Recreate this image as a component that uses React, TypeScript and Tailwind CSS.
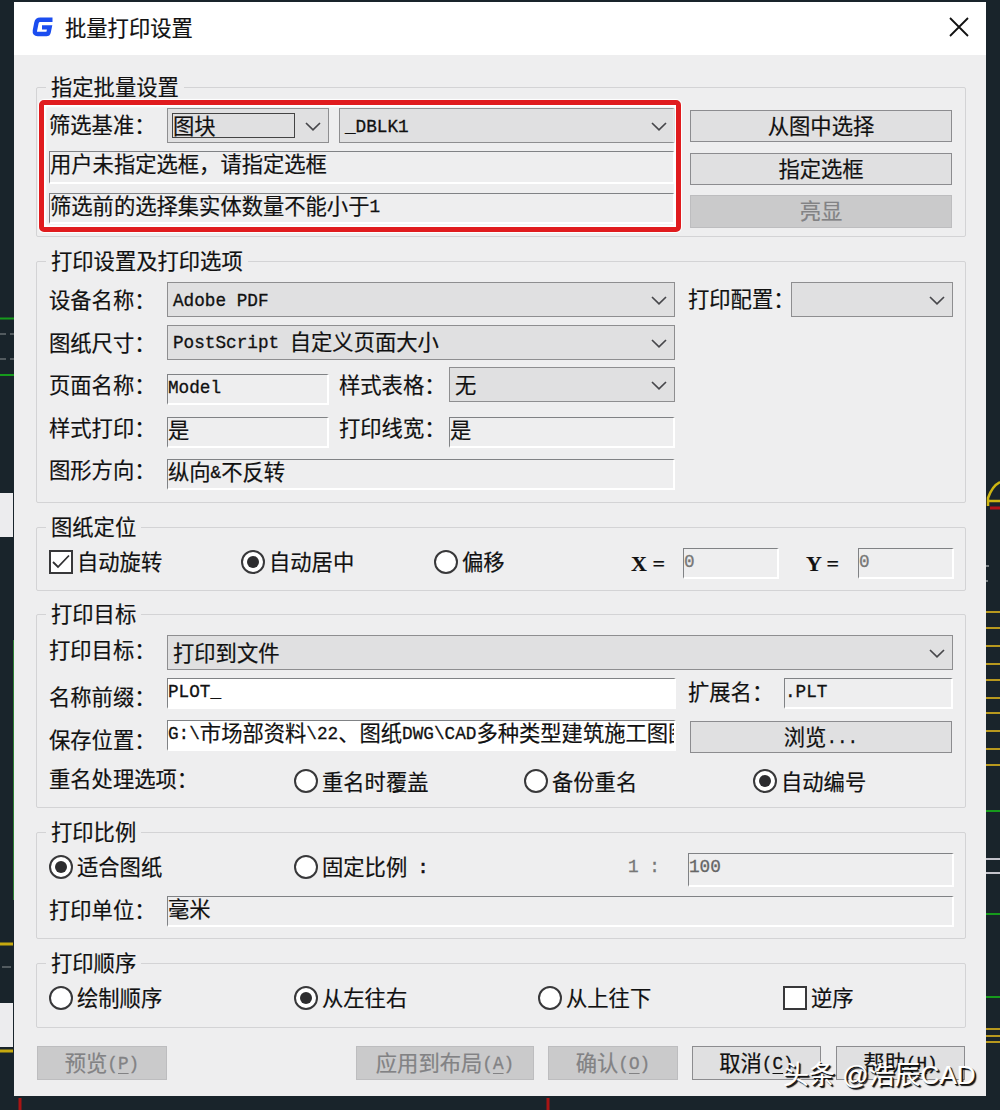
import type { ReactNode } from 'react';
import clsx from 'clsx';

function Latin({ children, className }: { children: ReactNode; className?: string }) {
  return (
    <span
      className={clsx(
        'align-[2px] whitespace-pre font-["Liberation_Mono","Noto_Sans_CJK_SC",monospace] text-[17.7px] [-webkit-text-stroke:0.3px]',
        className ?? 'leading-none',
      )}
    >
      {children}
    </span>
  );
}

function Group({ title, className, children }: { title: string; className: string; children: ReactNode }) {
  return (
    <section className={clsx('rounded-[2px] border border-[#d3d3d5] pl-3', className)}>
      <div className="flex h-0 items-center">
        <h2 className="-mt-[5px] -ml-[3px] bg-[#eeeeef] px-[5px] leading-6">{title}</h2>
      </div>
      {children}
    </section>
  );
}

function Label({ children, className = 'w-[118px] leading-[34px]' }: { children: ReactNode; className?: string }) {
  return <span className={clsx('shrink-0 whitespace-nowrap', className)}>{children}</span>;
}

function Select({ children, className, focused }: { children?: ReactNode; className: string; focused?: boolean }) {
  return (
    <div
      className={clsx(
        'flex h-[35px] shrink-0 items-center justify-between border border-[#8e8e90] bg-[#e0e0e1] pr-[7px]',
        focused ? 'pl-1' : 'pl-[5px]',
        className,
      )}
    >
      <span
        className={clsx(
          'whitespace-nowrap',
          focused ? 'h-[25px] w-[123px] border border-[#444] leading-[22px]' : 'pb-[2px]',
        )}
      >
        {children}
      </span>
      <svg className="mt-[2px] h-[9px] w-4" viewBox="0 0 16 9" fill="none" stroke="#47474b" strokeWidth="1.7">
        <path d="M1 1l7 6.8L15 1" />
      </svg>
    </div>
  );
}

function Field({ children, className }: { children?: ReactNode; className: string }) {
  return (
    <div
      className={clsx(
        'shrink-0 overflow-hidden whitespace-nowrap border-2 border-t border-l border-white border-t-[#808285] border-l-[#808285] leading-[22px]',
        className,
      )}
    >
      {children}
    </div>
  );
}

function Button({ children, className, disabled }: { children: ReactNode; className: string; disabled?: boolean }) {
  return (
    <button
      type="button"
      disabled={disabled}
      className={clsx(
        'shrink-0 border pb-[3px] leading-6 underline-offset-4',
        disabled ? 'border-[#bdbdbf] bg-[#cacacb] text-[#828284]' : 'border-[#8c8c8f] bg-[#e0e0e1]',
        className,
      )}
    >
      {children}
    </button>
  );
}

function Radio({ children, className, checked }: { children: ReactNode; className: string; checked?: boolean }) {
  return (
    <label className={clsx('flex shrink-0 items-center gap-1 whitespace-nowrap leading-6', className)}>
      <span className="flex size-6 items-center justify-center rounded-full border-2 border-[#38383a] bg-white">
        {checked && <span className="size-3 rounded-full bg-[#2d2d2f]" />}
      </span>
      <span className="pb-[1px]">{children}</span>
    </label>
  );
}

function Checkbox({ children, className, checked }: { children: ReactNode; className: string; checked?: boolean }) {
  return (
    <label className={clsx('flex shrink-0 items-center gap-1 whitespace-nowrap leading-6', className)}>
      <span className="flex size-6 items-center justify-center border-2 border-[#38383a] bg-white">
        {checked && (
          <svg className="size-5" viewBox="0 0 20 20" fill="none" stroke="#303032" strokeWidth="1.8">
            <path d="M2 10l5 5L18 3.5" />
          </svg>
        )}
      </span>
      <span className="pb-[1px]">{children}</span>
    </label>
  );
}

const yellowLines = [612, 628, 646, 664, 680, 698, 713, 731, 749, 765, 1029, 1036, 1042];

// Bits of the CAD drawing that stay visible around the dialog
function Drawing() {
  return (
    <svg className="absolute inset-0" width="1000" height="1110" fill="none" strokeWidth="2">
      <path d="M0 318.5h14M0 375h14M986 811h14M986 914h14M986 997h14" stroke="#169a1c" />
      <path d="M13.5 640v260" stroke="#2c7d35" strokeWidth="1" />
      <path d="M0 334h6m4 0h4M0 359h6m4 0h4M2 967h9" stroke="#8c9194" strokeWidth="1" />
      <path d="M0 493h13v44H0zM0 1003h13v44H0z" fill="#ececee" />
      <path d="M0 944h13M0 1051h13" stroke="#c6a90f" strokeWidth="3" />
      <path d="M20 1098v12M548 1098v12" stroke="#a81414" strokeWidth="3" />
      <path d="M986 859h14M986 873h14" stroke="#c3c3cb" />
      <path d="M986 566h3M986 581h2" stroke="#d4d8da" strokeWidth="1" />
      {yellowLines.map((y) => (
        <path key={y} d={`M986 ${y}h14`} stroke="#b7981e" />
      ))}
      <path d="M988 506V498Q992 486 1000 482M988 501h12" stroke="#cdb512" strokeWidth="2.5" />
      <path d="M990 508h10" stroke="#b01218" strokeWidth="3" />
    </svg>
  );
}

export default function App() {
  return (
    <div className='relative h-[1110px] w-[1000px] overflow-hidden bg-[#19242b] pt-[2px] pl-[14px] font-["Noto_Sans_CJK_SC",sans-serif] text-[21.3px] text-[#111] [-webkit-text-stroke:0.2px]'>
      <Drawing />
      <div className="relative h-[1094px] w-[972px] bg-[#eeeeef]">
        <header className="flex h-[53px] items-center bg-white pr-[17px] pb-[3px] pl-[18px]">
          <svg className="h-5 w-[21px]" viewBox="0 0 21 20" fill="none" stroke="#1b4df0" strokeWidth="4.4">
            <path d="M20.5 2.8H8.2Q5 2.8 4.4 6L2.9 13.5Q2.4 17 5.6 17H14.4Q16.2 17 16.6 15.2L17.6 10.4H10" />
          </svg>
          <h1 className="ml-[12px] pb-[1px] leading-6">批量打印设置</h1>
          <svg className="ml-auto h-5 w-5" viewBox="0 0 20 20" stroke="#111" strokeWidth="1.8">
            <path d="M1 1l18 18M19 1L1 19" />
          </svg>
        </header>

        <main className="pt-8 pr-5 pl-[22px]">
          <Group title="指定批量设置" className="h-[150px]">
            <div className="flex gap-[15px] pt-5">
              <div className="w-[626px]">
                <div className="flex h-[43px]">
                  <Label className="w-[118px] leading-[31px]">筛选基准：</Label>
                  <Select focused className="w-[162px]">图块</Select>
                  <Select className="ml-[10px] w-[336px]"><Latin>_DBLK1</Latin></Select>
                </div>
                <Field className="h-[33px] w-full">用户未指定选框，请指定选框</Field>
                <Field className="mt-[9px] h-[31px] w-full">
                  筛选前的选择集实体数量不能小于<Latin>1</Latin>
                </Field>
              </div>
              <div className="flex flex-col gap-[11px] pt-[2px]">
                <Button className="h-8 w-[262px]">从图中选择</Button>
                <Button className="h-8 w-[262px]">指定选框</Button>
                <Button disabled className="-mt-[1px] h-[33px] w-[262px]">亮显</Button>
              </div>
            </div>
            <div className="pointer-events-none absolute top-[98px] left-[25px] h-[132px] w-[642px] rounded-[5px] border-[5px] border-[#e01b1e] shadow-[0_0_1px_1px_#fff,inset_0_0_2px_2px_#fff]" />
          </Group>

          <Group title="打印设置及打印选项" className="mt-6 h-[242px]">
            <div className="pt-5">
              <div className="flex h-[42.6px]">
                <Label>设备名称：</Label>
                <Select className="w-[508px]"><Latin>Adobe PDF</Latin></Select>
                <Label className="ml-[13px] w-[103px] leading-[31px]">打印配置：</Label>
                <Select className="w-[162px]" />
              </div>
              <div className="flex h-[42.6px]">
                <Label>图纸尺寸：</Label>
                <Select className="w-[508px]"><Latin>PostScript </Latin>自定义页面大小</Select>
              </div>
              <div className="flex h-[42.6px]">
                <Label>页面名称：</Label>
                <Field className="mt-[7px] h-[31px] w-[162px]"><Latin>Model</Latin></Field>
                <Label className="ml-[10px] w-[110px] leading-[34px]">样式表格：</Label>
                <Select className="w-[226px]">无</Select>
              </div>
              <div className="flex h-[42.6px]">
                <Label>样式打印：</Label>
                <Field className="mt-[7px] h-[31px] w-[162px]">是</Field>
                <Label className="ml-[10px] w-[110px] leading-[34px]">打印线宽：</Label>
                <Field className="mt-[7px] h-[31px] w-[226px]">是</Field>
              </div>
              <div className="flex h-[42.6px]">
                <Label>图形方向：</Label>
                <Field className="mt-[7px] h-[31px] w-[508px]">纵向<Latin>&amp;</Latin>不反转</Field>
              </div>
            </div>
          </Group>

          <Group title="图纸定位" className="mt-6 h-[64px]">
            <div className="flex pt-5">
              <Checkbox checked className="h-[27px] w-[192px]">自动旋转</Checkbox>
              <Radio checked className="h-[27px] w-[193px]">自动居中</Radio>
              <Radio className="h-[27px] w-[197px]">偏移</Radio>
              <span className='w-[52px] font-["Liberation_Serif",serif] text-[22px] leading-8 font-bold'>X =</span>
              <Field className="h-[31px] w-[96px] text-[#777]"><Latin>0</Latin></Field>
              <span className='ml-[27px] w-[52px] font-["Liberation_Serif",serif] text-[22px] leading-8 font-bold'>Y =</span>
              <Field className="h-[31px] w-[96px] text-[#777]"><Latin>0</Latin></Field>
            </div>
          </Group>

          <Group title="打印目标" className="mt-[23px] h-[194px]">
            <div className="pt-5">
              <div className="flex h-[43px]">
                <Label className="w-[118px] leading-[27px]">打印目标：</Label>
                <Select className="w-[786px]">打印到文件</Select>
              </div>
              <div className="flex h-[42px]">
                <Label className="w-[118px] leading-[36px]">名称前缀：</Label>
                <Field className="h-[31px] w-[509px] bg-white"><Latin>PLOT_</Latin></Field>
                <Label className="ml-3 w-[96px] leading-[26px]">扩展名：</Label>
                <Field className="h-[31px] w-[169px]"><Latin>.PLT</Latin></Field>
              </div>
              <div className="flex h-[43px]">
                <Label className="w-[118px] leading-[37px]">保存位置：</Label>
                <Field className="h-[31px] w-[509px] bg-white">
                  <Latin>G:\</Latin>市场部资料<Latin>\22</Latin>、图纸<Latin>DWG\CAD</Latin>多种类型建筑施工图图
                </Field>
                <Button className="mt-[1px] ml-[14px] h-8 w-[262px]">浏览<Latin>...</Latin></Button>
              </div>
              <div className="flex h-9">
                <Label className="w-[245px] leading-[29px]">重名处理选项：</Label>
                <Radio className="w-[230px]">重名时覆盖</Radio>
                <Radio className="w-[229px]">备份重名</Radio>
                <Radio checked className="w-[120px]">自动编号</Radio>
              </div>
            </div>
          </Group>

          <Group title="打印比例" className="mt-6 h-[107px]">
            <div className="pt-5">
              <div className="flex h-[43px]">
                <Radio checked className="h-[27px] w-[245px]">适合图纸</Radio>
                <Radio className="h-[27px] w-[334px]">
                  固定比例<Latin className="font-bold leading-none"> :</Latin>
                </Radio>
                <Latin className="w-[60px] leading-[29px] text-[#777]">1 :</Latin>
                <Field className="h-[34px] w-[266px] text-[#666]"><Latin>100</Latin></Field>
              </div>
              <div className="flex">
                <Label className="w-[118px] leading-[26px]">打印单位：</Label>
                <Field className="h-[31px] w-[787px]">毫米</Field>
              </div>
            </div>
          </Group>

          <Group title="打印顺序" className="mt-6 h-[65px]">
            <div className="flex items-center pt-[21px]">
              <Radio className="w-[245px]">绘制顺序</Radio>
              <Radio checked className="w-[244px]">从左往右</Radio>
              <Radio className="w-[245px]">从上往下</Radio>
              <Checkbox className="w-[120px]">逆序</Checkbox>
            </div>
          </Group>

          <footer className="mt-[18px] flex pl-[1px]">
            <Button disabled className="h-[34px] w-[130px]">预览<Latin>(<u>P</u>)</Latin></Button>
            <Button disabled className="ml-[189px] h-[34px] w-[178px]">应用到布局<Latin>(<u>A</u>)</Latin></Button>
            <Button disabled className="ml-[14px] h-[34px] w-[130px]">确认<Latin>(<u>O</u>)</Latin></Button>
            <Button className="ml-[14px] h-[34px] w-[129px]">取消<Latin>(<u>C</u>)</Latin></Button>
            <Button className="ml-[15px] h-[34px] w-[129px]">帮助<Latin>(<u>H</u>)</Latin></Button>
          </footer>
        </main>
      </div>
      <p className='absolute top-[1055px] left-[783px] font-["Liberation_Sans","Noto_Sans_CJK_SC",sans-serif] text-[26px] leading-10 whitespace-nowrap text-white [text-shadow:2px_2px_1px_#111,1px_1px_0_#111]'>
        头条 @浩辰CAD
      </p>
    </div>
  );
}
